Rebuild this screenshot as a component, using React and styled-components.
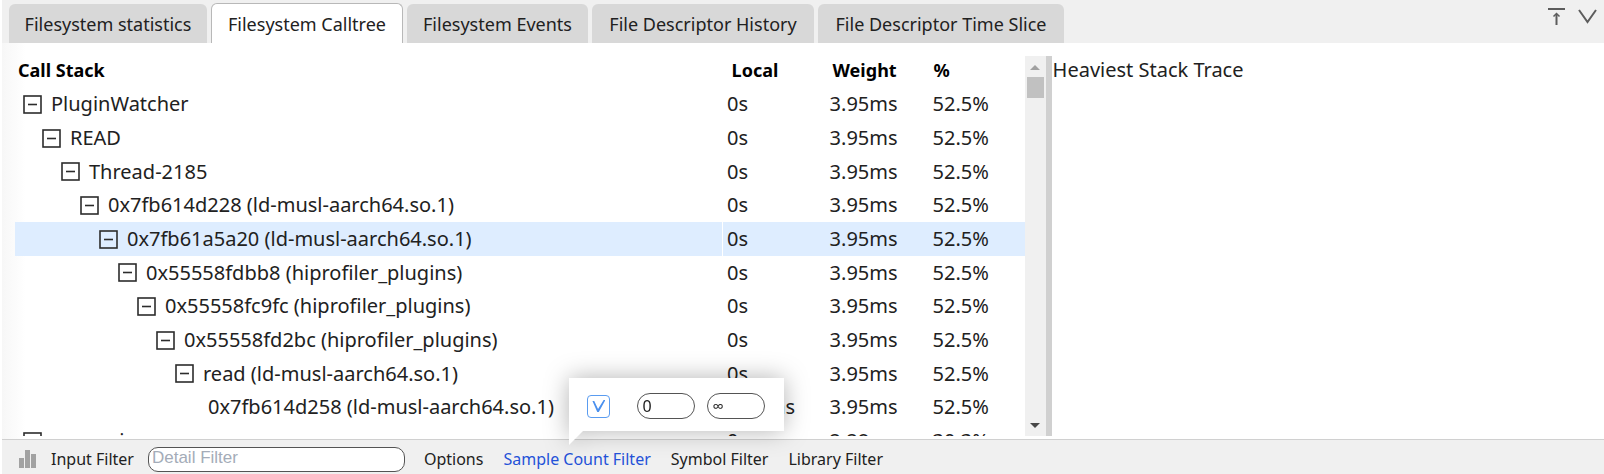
import React, { useState } from 'react';
import styled, { createGlobalStyle } from 'styled-components';

const GlobalStyle = createGlobalStyle`
  *, *::before, *::after { box-sizing: border-box; }
  body { margin: 0; background: #fff; }
  body, button, input { font-family: "Noto Sans", "Open Sans", sans-serif; color: #212121; }
`;

const Page = styled.div`
  display: flex;
  flex-direction: column;
  height: 100vh;
  padding-left: 2px;
  overflow: hidden;
`;

const TabBar = styled.header`
  display: flex;
  align-items: flex-end;
  justify-content: space-between;
  height: 43px;
  flex-shrink: 0;
  padding-left: 7px;
  background: #f0f0f0;
`;

const TabList = styled.div`
  display: flex;
  align-items: flex-end;
  gap: 4px;
`;

const Tab = styled.button`
  width: ${(p) => p.$width}px;
  height: ${(p) => (p.$active ? 40 : 39)}px;
  padding: 0;
  border: ${(p) => (p.$active ? '1px solid #b8b8b8' : '0')};
  border-bottom: 0;
  border-radius: 6px 6px 0 0;
  background: ${(p) => (p.$active ? '#fff' : '#d8d8d8')};
  font-size: 18px;
  line-height: 24px;
  text-align: center;
  white-space: nowrap;
`;

const BarActions = styled.div`
  display: flex;
  align-self: flex-start;
  gap: 12px;
  padding: 6px 6px 0 0;
`;

const IconButton = styled.button`
  display: flex;
  padding: 0;
  border: 0;
  background: none;
`;

const Content = styled.main`
  display: grid;
  grid-template-columns: minmax(0, 19fr) minmax(0, 10fr);
  grid-template-rows: minmax(0, 1fr);
  flex: 1;
  min-height: 0;
  padding: 13px 0 3px;
  background: linear-gradient(to right, #f7f7f7, #fff 24px);
`;

const TreePane = styled.section`
  display: flex;
  min-width: 0;
  padding-left: 13px;
`;

const TreeScroll = styled.div`
  flex: 1;
  min-width: 0;
  overflow: hidden;
`;

const Tree = styled.table`
  width: 100%;
  table-layout: fixed;
  border-collapse: collapse;
  font-size: 20px;
  line-height: 24px;
`;

const MetricCol = styled.col`
  width: ${(p) => p.$width}px;
`;

const HeadCell = styled.th`
  height: 31px;
  padding: 0 0 3px ${(p) => p.$indent}px;
  text-align: left;
  font-size: 18px;
  font-weight: 700;
  color: #000;
`;

const Row = styled.tr`
  height: 34px;
  background: ${(p) => (p.$selected ? '#deedff' : 'transparent')};
  &:nth-child(3n) { height: 33px; }
`;

const Cell = styled.td`
  padding: 0 0 0 4px;
  white-space: nowrap;
`;

const NameCell = styled(Cell)`
  padding: 0;
  border-right: 1px solid #fff;
`;

const Node = styled.div`
  display: flex;
  align-items: center;
  gap: 9px;
  padding-left: ${(p) => 8 + p.$depth * 19}px;
`;

const Toggle = styled.button`
  display: flex;
  padding: 0;
  border: 0;
  background: none;
`;

const LeafSpace = styled.span`
  width: 5px;
`;

const Scrollbar = styled.div`
  display: flex;
  flex-direction: column;
  align-items: center;
  width: 21px;
  background: #f0f0f0;
`;

const ScrollButton = styled.button`
  display: flex;
  align-items: center;
  justify-content: center;
  width: 21px;
  height: 21px;
  padding: 0;
  border: 0;
  background: none;
`;

const ScrollThumb = styled.div`
  width: 17px;
  height: 21px;
  margin-bottom: auto;
  background: #c1c1c1;
`;

const Splitter = styled.div`
  width: 6px;
  background: #d0d0d0;
`;

const TracePane = styled.section`
  min-width: 0;
  padding-left: 1px;
`;

const TraceTitle = styled.h2`
  margin: 0;
  font-size: 20px;
  font-weight: 400;
  line-height: 28px;
`;

const FilterBar = styled.footer`
  display: flex;
  align-items: center;
  flex-shrink: 0;
  height: 35px;
  padding: 4px 0 0 16px;
  border-top: 1px solid #d0d0d0;
  background: #f0f0f0;
  font-size: 16px;
  line-height: 24px;
`;

const ChartIcon = styled.svg`
  margin-right: 13px;
`;

const FilterInput = styled.input`
  width: 257px;
  height: 25px;
  margin: 0 19px 0 14px;
  padding: 0 3px 2px;
  border: 1px solid #545454;
  border-radius: 10px;
  background: #fff;
  font-family: "Liberation Sans", sans-serif;
  font-size: 17px;
  &::placeholder { color: #a4acb8; }
`;

const FilterMenu = styled.nav`
  display: flex;
  gap: 20px;
`;

const FilterItem = styled.div`
  position: relative;
`;

const FilterLink = styled.button`
  padding: 0;
  border: 0;
  background: none;
  color: ${(p) => (p.$active ? '#2452d8' : '#212121')};
  font-size: 16px;
  line-height: 24px;
  white-space: nowrap;
`;

const Popover = styled.div`
  position: absolute;
  left: 66px;
  bottom: 40px;
  display: flex;
  align-items: center;
  gap: 12px;
  width: 215px;
  height: 53px;
  padding: 3px 19px 0 18px;
  background: #fff;
  filter: drop-shadow(0 0 12px rgba(0, 0, 0, 0.3));
  &::after {
    content: "";
    position: absolute;
    top: 100%;
    left: 0;
    border-top: 14px solid #fff;
    border-right: 14px solid transparent;
  }
`;

const CheckBox = styled.input`
  appearance: none;
  display: grid;
  place-items: center;
  width: 23px;
  height: 23px;
  margin: 0 15px 0 0;
  border: 1px solid #5a9cf0;
  border-radius: 4px;
  &:checked::after {
    content: "";
    width: 13px;
    height: 12px;
    background: #4a90ee;
    clip-path: polygon(0 8%, 14% 8%, 43% 76%, 86% 0, 100% 0, 49% 100%, 37% 100%);
  }
`;

const RangeInput = styled.input`
  width: 58px;
  height: 26px;
  padding: 0 4px;
  border: 1px solid #545454;
  border-radius: 13px;
  background: #fff;
  font-size: 16px;
`;

const TABS = [
  { label: 'Filesystem statistics', width: 198 },
  { label: 'Filesystem Calltree', width: 192 },
  { label: 'Filesystem Events', width: 181 },
  { label: 'File Descriptor History', width: 222 },
  { label: 'File Descriptor Time Slice', width: 246 },
];

const ROWS = [
  { name: 'PluginWatcher', depth: 0 },
  { name: 'READ', depth: 1 },
  { name: 'Thread-2185', depth: 2 },
  { name: '0x7fb614d228 (ld-musl-aarch64.so.1)', depth: 3 },
  { name: '0x7fb61a5a20 (ld-musl-aarch64.so.1)', depth: 4 },
  { name: '0x55558fdbb8 (hiprofiler_plugins)', depth: 5 },
  { name: '0x55558fc9fc (hiprofiler_plugins)', depth: 6 },
  { name: '0x55558fd2bc (hiprofiler_plugins)', depth: 7 },
  { name: 'read (ld-musl-aarch64.so.1)', depth: 8 },
  { name: '0x7fb614d258 (ld-musl-aarch64.so.1)', depth: 9, leaf: true, local: '3.95ms' },
  { name: 'power_i', depth: 0, weight: '2.28ms', percent: '30.3%' },
];

const FILTERS = ['Options', 'Sample Count Filter', 'Symbol Filter', 'Library Filter'];

function TreeRow({ row, selected }) {
  return (
    <Row $selected={selected}>
      <NameCell>
        <Node $depth={row.depth}>
          {row.leaf ? (
            <LeafSpace />
          ) : (
            <Toggle aria-label={`Collapse ${row.name}`}>
              <svg width="19" height="19" viewBox="0 0 19 19" fill="none" stroke="#2c2c2c">
                <rect x="1" y="1" width="17" height="17" strokeWidth="1.6" />
                <path d="M5 9.5h9" strokeWidth="1.6" />
              </svg>
            </Toggle>
          )}
          <span>{row.name}</span>
        </Node>
      </NameCell>
      <Cell>{row.local || '0s'}</Cell>
      <Cell>{row.weight || '3.95ms'}</Cell>
      <Cell>{row.percent || '52.5%'}</Cell>
    </Row>
  );
}

function CountPopover() {
  const [checked, setChecked] = useState(true);
  return (
    <Popover>
      <CheckBox
        type="checkbox"
        aria-label="Enable sample count filter"
        checked={checked}
        onChange={(e) => setChecked(e.target.checked)}
      />
      <RangeInput aria-label="Minimum count" defaultValue="0" />
      <RangeInput aria-label="Maximum count" defaultValue="∞" />
    </Popover>
  );
}

export default function App() {
  const [tab, setTab] = useState(1);
  return (
    <Page>
      <GlobalStyle />
      <TabBar>
        <TabList role="tablist">
          {TABS.map(({ label, width }, i) => (
            <Tab
              key={label}
              role="tab"
              aria-selected={i === tab}
              $active={i === tab}
              $width={width}
              onClick={() => setTab(i)}
            >
              {label}
            </Tab>
          ))}
        </TabList>
        <BarActions>
          <IconButton aria-label="Move to top">
            <svg width="20" height="20" viewBox="0 0 20 20" fill="none" stroke="#5c5c5c">
              <path d="M2 3h17" strokeWidth="2" />
              <path d="M10.5 19V8" strokeWidth="2" />
              <path d="M7.5 10.5l3-3 3 3" strokeWidth="1.5" />
            </svg>
          </IconButton>
          <IconButton aria-label="Collapse panel">
            <svg width="20" height="20" viewBox="0 0 20 20" fill="none" stroke="#5c5c5c" strokeWidth="2">
              <path d="M1 4l8.5 12L18 4" />
            </svg>
          </IconButton>
        </BarActions>
      </TabBar>
      <Content>
        <TreePane>
          <TreeScroll>
            <Tree>
              <colgroup>
                <col />
                <MetricCol $width={103} />
                <MetricCol $width={103} />
                <MetricCol $width={96} />
              </colgroup>
              <thead>
                <tr>
                  <HeadCell $indent={3}>Call Stack</HeadCell>
                  <HeadCell $indent={9}>Local</HeadCell>
                  <HeadCell $indent={7}>Weight</HeadCell>
                  <HeadCell $indent={5}>%</HeadCell>
                </tr>
              </thead>
              <tbody>
                {ROWS.map((row, i) => (
                  <TreeRow key={row.name} row={row} selected={i === 4} />
                ))}
              </tbody>
            </Tree>
          </TreeScroll>
          <Scrollbar>
            <ScrollButton aria-label="Scroll up">
              <svg width="10" height="6" viewBox="0 0 10 6"><path d="M0 6l5-5 5 5z" fill="#a0a0a0" /></svg>
            </ScrollButton>
            <ScrollThumb />
            <ScrollButton aria-label="Scroll down">
              <svg width="10" height="6" viewBox="0 0 10 6"><path d="M0 0l5 5 5-5z" fill="#484848" /></svg>
            </ScrollButton>
          </Scrollbar>
          <Splitter />
        </TreePane>
        <TracePane>
          <TraceTitle>Heaviest Stack Trace</TraceTitle>
        </TracePane>
      </Content>
      <FilterBar>
        <ChartIcon width="20" height="20" viewBox="0 0 20 20" fill="#a2a2a2">
          <path d="M1 9h5v10H1zM7 1h5v18H7zM13 5h5v14h-5z" />
        </ChartIcon>
        <label htmlFor="detail-filter">Input Filter</label>
        <FilterInput id="detail-filter" placeholder="Detail Filter" />
        <FilterMenu>
          {FILTERS.map((label, i) => (
            <FilterItem key={label}>
              <FilterLink $active={i === 1}>{label}</FilterLink>
              {i === 1 && <CountPopover />}
            </FilterItem>
          ))}
        </FilterMenu>
      </FilterBar>
    </Page>
  );
}
